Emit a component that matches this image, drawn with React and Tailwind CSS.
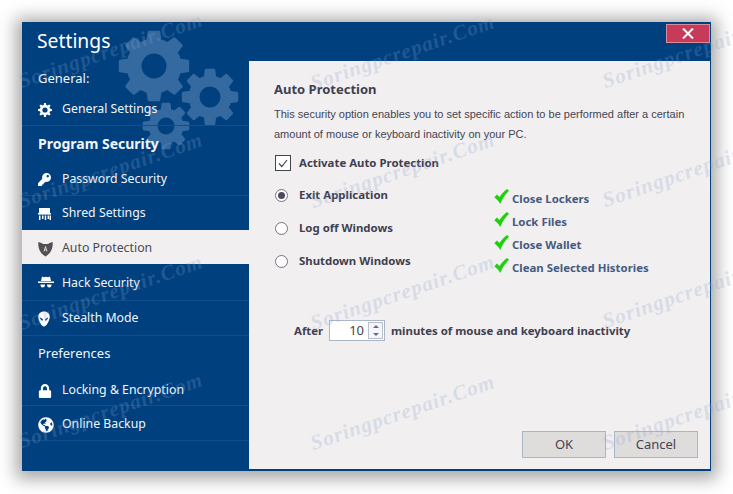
import { FaKey, FaLock, FaGlobeAmericas } from "react-icons/fa";

const FONT = "font-['Noto_Sans','DejaVu_Sans',sans-serif]";

// builds a cog outline with a round hole, used for the sidebar backdrop
function gearPath(cx, cy, outer, inner, hole, teeth) {
  let d = "";
  const step = (Math.PI * 2) / teeth;
  for (let i = 0; i < teeth; i++) {
    const a = i * step;
    const pts = [
      [inner, a - step * 0.5],
      [inner, a - step * 0.3],
      [outer, a - step * 0.18],
      [outer, a + step * 0.18],
      [inner, a + step * 0.3],
    ];
    pts.forEach(([r, t], j) => {
      const x = (cx + r * Math.cos(t)).toFixed(1);
      const y = (cy + r * Math.sin(t)).toFixed(1);
      d += (i === 0 && j === 0 ? "M" : "L") + x + " " + y + " ";
    });
  }
  d += "Z ";
  d += `M${cx - hole} ${cy} a${hole} ${hole} 0 1 0 ${hole * 2} 0 a${hole} ${hole} 0 1 0 ${-hole * 2} 0 Z`;
  return d;
}

function Gears() {
  return (
    <svg className="absolute left-0 top-0 pointer-events-none" width="227" height="160" viewBox="0 0 227 160">
      <g fill="#346a9f" stroke="#346a9f" strokeWidth="3" strokeLinejoin="round" fillRule="evenodd">
        <path d={gearPath(132, 44, 34, 26, 14, 8)} />
        <path d={gearPath(188, 75, 27, 20, 12, 8)} />
        <path d={gearPath(144, 104, 22, 16, 10, 8)} />
      </g>
    </svg>
  );
}

function CogIcon() {
  return (
    <svg width="14" height="14" viewBox="0 0 14 14">
      <path fillRule="evenodd" fill="#fff" d={gearPath(7, 7, 7, 5.2, 2.6, 8)} />
    </svg>
  );
}

function ShredIcon() {
  return (
    <svg width="13" height="12" viewBox="0 0 13 12" fill="#fff">
      <path d="M1 0h11v5H1z" />
      <path d="M0 5h13v1.6H0z" />
      <path d="M1 7.500h1.500V12H1zM4 7.500h1.500V11H4zM6.800 7.500h1.400V12H6.800zM9.600 7.500H11V11H9.600zM11.500 7.500H13V12h-1.500z" />
    </svg>
  );
}

function ShieldIcon() {
  return (
    <svg width="15" height="16" viewBox="0 0 15 15">
      <path d="M0.300 0.500 3.500 1.500 5 2.500h5l1.500-1 3.200-1c0.300 6.500-1.500 11-7.200 14.500C1.800 11.500 0 7 0.300 0.500z" fill="#544f52" />
      <path d="M6 10 7.500 5 9 10M6.500 8.300h2" stroke="#d9d6d7" strokeWidth="1" fill="none" />
    </svg>
  );
}

function HatIcon() {
  return (
    <svg width="16" height="14" viewBox="0 0 16 14" fill="#fff">
      <path d="M4 0.500 6 1.200 8 0.700 10 1.200 12 0.500 13 5H3z" />
      <path d="M0 5.500h16V7H0z" />
      <path d="M2.500 8.500h4.500c0 1.800-0.800 3-2.300 3s-2.200-1.200-2.200-3zM9 8.500h4.500c0 1.800-0.700 3-2.200 3S9 10.300 9 8.500z" />
    </svg>
  );
}

function AlienIcon() {
  return (
    <svg width="12" height="16" viewBox="0 0 12 15">
      <path d="M6 0C2.500 0 0.200 2.300 0.300 5.500 0.400 9 3.500 15 6 15s5.600-6 5.700-9.500C11.800 2.300 9.500 0 6 0z" fill="#fff" />
      <path d="M1.800 5.800 5 7.800 4.600 9.300C3.200 8.800 2 7.500 1.800 5.800zM10.200 5.800 7 7.800 7.400 9.300C8.800 8.800 10 7.500 10.200 5.800z" fill="#00407f" />
    </svg>
  );
}

function GreenCheck() {
  return (
    <svg width="15" height="15" viewBox="0 0 15 15" className="shrink-0">
      <path d="M0.300 8.300 3 5.500 5.500 8C7.500 5 10 2.300 13 0L15 1.800C11.500 5 8.500 9.500 6.300 15 4.800 12.300 2.600 10 0.300 8.300z" fill="#1fd00f" />
    </svg>
  );
}

function NavRow({ icon, label, active, border = true, className = "h-[35px] pt-[3px]" }) {
  return (
    <div
      className={`${className} flex items-center pl-[16px] text-[12.300px] ${
        active ? "bg-[#f1eff0] text-[#4a4a55] border-b border-[#00407f]" : "text-[#f2f5f9]"
      } ${border && !active ? "border-b border-[#11508f]" : ""}`}
    >
      <span className="w-[24px] flex justify-start shrink-0">{icon}</span>
      {label}
    </div>
  );
}

function SectionRow({ label, bold }) {
  return (
    <div className={`h-[35px] flex items-center pl-[16px] text-[#f2f5f9] ${bold ? "text-[14px] font-bold" : "text-[13px]"}`}>
      {label}
    </div>
  );
}

function Radio({ checked, label }) {
  return (
    <div className="h-[33px] flex items-center">
      <span className="w-[13px] h-[13px] ml-[1px] rounded-full border border-[#7d6f80] bg-white flex items-center justify-center shrink-0">
        {checked && <span className="w-[7px] h-[7px] rounded-full bg-[#4a4a5a]" />}
      </span>
      <span className="ml-[11px] pb-[2px] text-[11.400px] font-bold text-[#3f3f50]">{label}</span>
    </div>
  );
}

function Result({ label }) {
  return (
    <div className="h-[23px] flex items-start">
      <GreenCheck />
      <span className="ml-[3px] mt-[2px] text-[11.400px] leading-[16px] font-bold text-[#465a80]">{label}</span>
    </div>
  );
}

// diagonal site stamp; left/top place the start of its baseline
function Watermark({ className }) {
  return (
    <span
      className={`absolute pointer-events-none whitespace-nowrap italic font-['Liberation_Serif',serif] text-[21px] leading-[24px] font-bold tracking-[1px] text-[#8aa0c8]/25 origin-bottom-left -rotate-[19deg] ${className}`}
    >
      Soringpcrepair.Com
    </span>
  );
}

export default function App() {
  return (
    <div className={`${FONT} w-[733px] h-[494px] bg-white pt-[22px] pl-[22px] overflow-hidden relative`}>
      <div className="w-[689px] h-[449px] bg-[#00407f] flex shadow-[0_2px_16px_6px_rgba(0,0,0,0.35)] relative">
        {/* sidebar */}
        <div className="w-[227px] shrink-0 relative">
          <Gears />
          <div className="relative">
            <div className="h-[38px] flex items-center pl-[15px] pt-[1px] text-[19.300px] text-white">Settings</div>
            <div className="h-[31px] flex items-end pb-[3px] pl-[16px] text-[13px] text-[#f2f5f9]">General:</div>
            <NavRow icon={<CogIcon />} label="General Settings" />
            <SectionRow label="Program Security" bold />
            <NavRow icon={<FaKey className="text-white text-[13px]" />} label="Password Security" />
            <NavRow icon={<ShredIcon />} label="Shred Settings" border={false} className="h-[34px] pt-[1px]" />
            <NavRow icon={<ShieldIcon />} label="Auto Protection" active />
            <NavRow icon={<HatIcon />} label="Hack Security" className="h-[36px] pt-[1px]" />
            <NavRow icon={<AlienIcon />} label="Stealth Mode" className="h-[35px] pt-[1px]" />
            <SectionRow label="Preferences" />
            <NavRow icon={<FaLock className="text-white text-[14px]" />} label="Locking & Encryption" className="h-[35px] pt-[5px]" />
            <NavRow icon={<FaGlobeAmericas className="text-white text-[16px]" />} label="Online Backup" />
          </div>
        </div>

        {/* right side */}
        <div className="flex-1 flex flex-col pr-[1px] pb-[2px]">
          <div className="h-[39px] shrink-0 flex justify-end items-start pt-[2px]">
            <button className="w-[44px] h-[19px] bg-[#c73a5a] border border-[#d98c9c] flex items-center justify-center">
              <svg width="12" height="11" viewBox="0 0 12 11">
                <path d="M1 0.500 11 10.500M11 0.500 1 10.500" stroke="#fff" strokeWidth="2" />
              </svg>
            </button>
          </div>
          <div className="flex-1 bg-[#f1eff0] pl-[25px] pr-[12px] flex flex-col">
            <h2 className="mt-[18px] text-[13px] font-bold leading-[20px] text-[#3f3f50]">Auto Protection</h2>
            <p className="mt-[5px] font-['Liberation_Sans',sans-serif] text-[11px] leading-[20px] text-[#444450] w-[420px]">
              This security option enables you to set specific action to be performed after a certain amount of mouse or keyboard inactivity on your PC.
            </p>
            <div className="mt-[10px] flex items-center h-[18px]">
              <span className="w-[16px] h-[16px] ml-[1px] border border-[#444450] bg-white flex items-center justify-center">
                <svg width="10" height="9" viewBox="0 0 10 9">
                  <path d="M1 4.500 3.800 7.500 9 1" stroke="#444450" strokeWidth="1.200" fill="none" />
                </svg>
              </span>
              <span className="ml-[8px] text-[11.400px] font-bold text-[#3f3f50]">Activate Auto Protection</span>
            </div>
            <div className="mt-[7px] flex">
              <div className="w-[220px]">
                <Radio checked label="Exit Application" />
                <Radio label="Log off Windows" />
                <Radio label="Shutdown Windows" />
              </div>
              <div className="pt-[10px]">
                <Result label="Close Lockers" />
                <Result label="Lock Files" />
                <Result label="Close Wallet" />
                <Result label="Clean Selected Histories" />
              </div>
            </div>
            <div className="mt-[39px] ml-[20px] flex items-center text-[11.400px] font-bold text-[#3f3f50]">
              <span className="w-[28px]">After</span>
              <div className="ml-[7px] w-[56px] h-[21px] border border-[#a9b6c6] bg-white flex items-center justify-end">
                <span className="font-normal text-[13px] text-[#444450] mr-[4px]">10</span>
                <div className="w-[15px] h-[17px] mr-[1px] border border-[#b5bfcc] flex flex-col items-center justify-around bg-[#f6f6f8]">
                  <span className="w-0 h-0 border-x-[3px] border-x-transparent border-b-[3px] border-b-[#5a6c99]" />
                  <span className="w-0 h-0 border-x-[3px] border-x-transparent border-t-[3px] border-t-[#5a6c99]" />
                </div>
              </div>
              <span className="ml-[6px]">minutes of mouse and keyboard inactivity</span>
            </div>
            <div className="mt-auto mb-[11px] flex justify-end gap-[8px]">
              <button className="w-[84px] h-[27px] bg-[#dfdddc] border border-[#a9b6c6] text-[13px] text-[#444450]">OK</button>
              <button className="w-[84px] h-[27px] bg-[#dfdddc] border border-[#a9b6c6] text-[13px] text-[#444450]">Cancel</button>
            </div>
          </div>
        </div>
      </div>

      <Watermark className="left-[23px] top-[69px]" />
      <Watermark className="left-[23px] top-[189px]" />
      <Watermark className="left-[23px] top-[311px]" />
      <Watermark className="left-[23px] top-[429px]" />
      <Watermark className="left-[315px] top-[71px]" />
      <Watermark className="left-[315px] top-[189px]" />
      <Watermark className="left-[315px] top-[311px]" />
      <Watermark className="left-[315px] top-[431px]" />
      <Watermark className="left-[607px] top-[69px]" />
      <Watermark className="left-[607px] top-[188px]" />
      <Watermark className="left-[607px] top-[309px]" />
      <Watermark className="left-[607px] top-[431px]" />
    </div>
  );
}
